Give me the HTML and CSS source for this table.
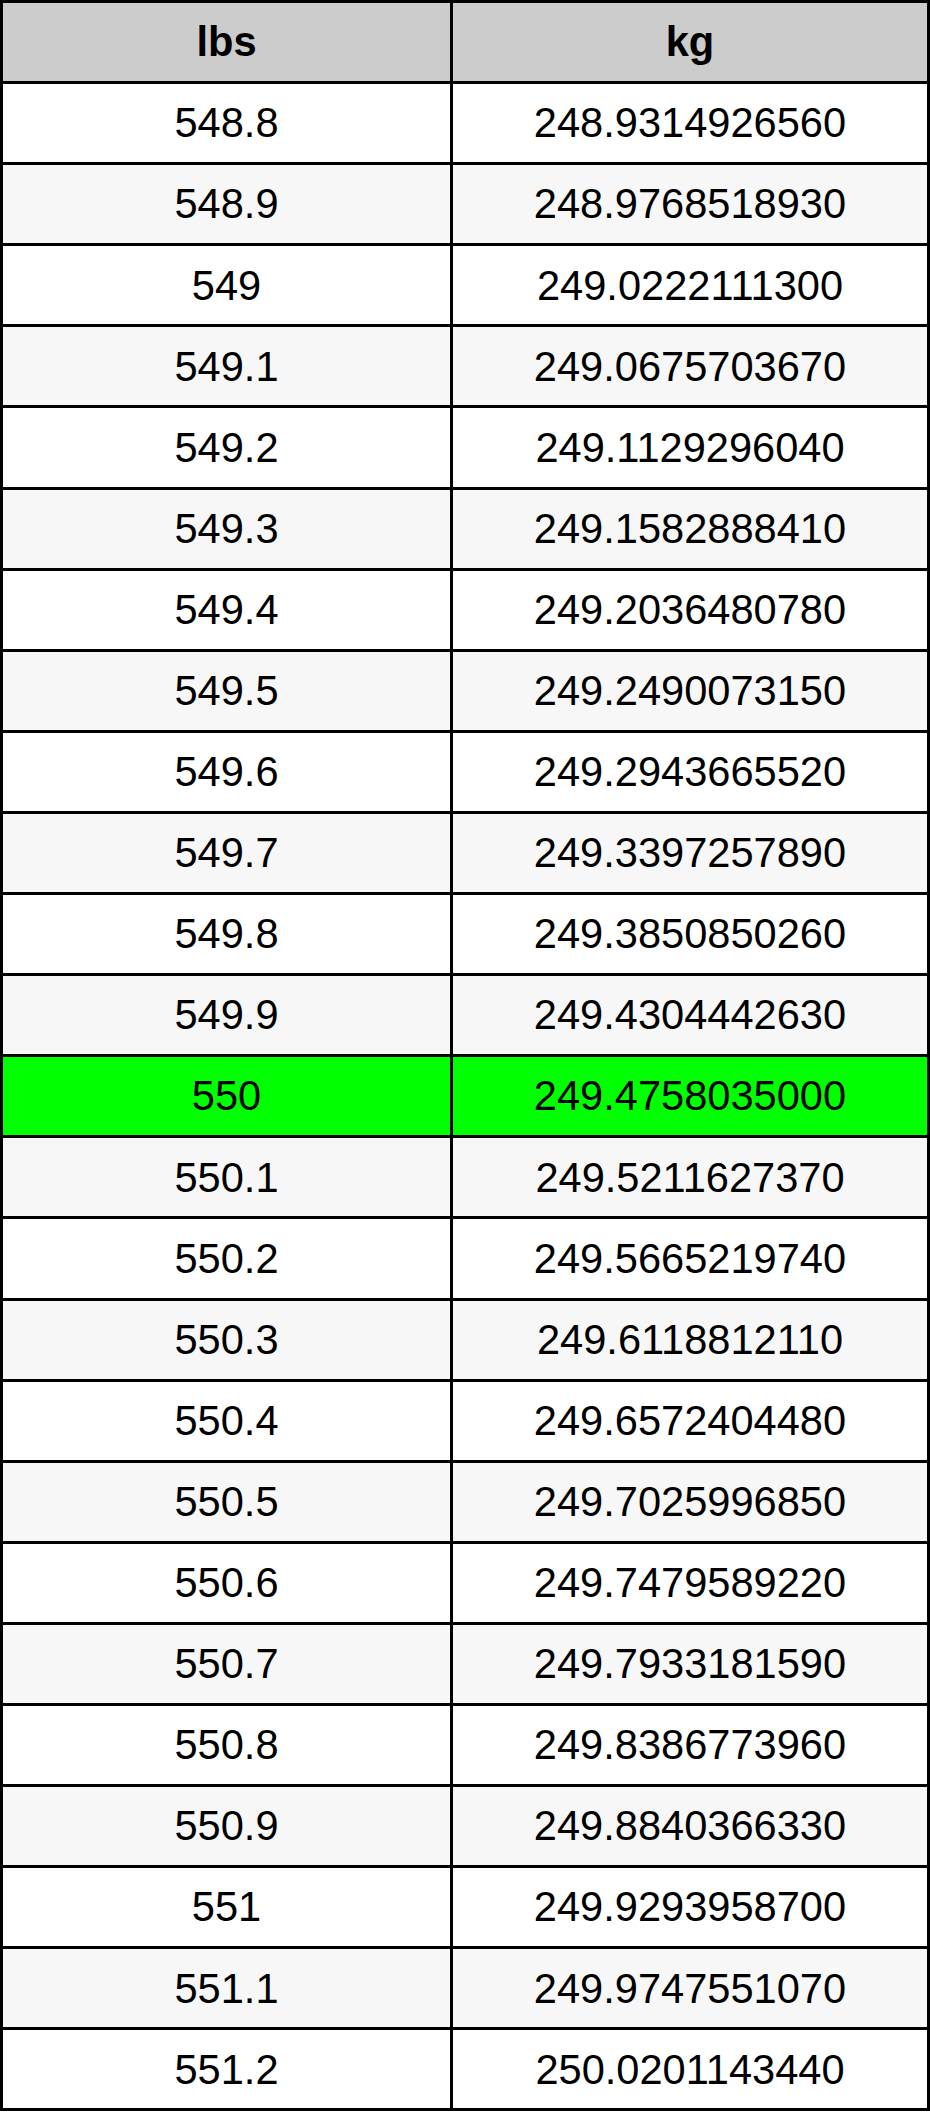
FILE: index.html
```html
<!DOCTYPE html>
<html>
<head>
<meta charset="utf-8">
<link rel="stylesheet" href="styles.css">
</head>
<body>
<table class="conv">
<thead>
<tr><th class="c1">lbs</th><th class="c2">kg</th></tr>
</thead>
<tbody>
<tr><td>548.8</td><td>248.9314926560</td></tr>
<tr><td>548.9</td><td>248.9768518930</td></tr>
<tr><td>549</td><td>249.0222111300</td></tr>
<tr><td>549.1</td><td>249.0675703670</td></tr>
<tr><td>549.2</td><td>249.1129296040</td></tr>
<tr><td>549.3</td><td>249.1582888410</td></tr>
<tr><td>549.4</td><td>249.2036480780</td></tr>
<tr><td>549.5</td><td>249.2490073150</td></tr>
<tr><td>549.6</td><td>249.2943665520</td></tr>
<tr><td>549.7</td><td>249.3397257890</td></tr>
<tr><td>549.8</td><td>249.3850850260</td></tr>
<tr><td>549.9</td><td>249.4304442630</td></tr>
<tr class="hl"><td>550</td><td>249.4758035000</td></tr>
<tr><td>550.1</td><td>249.5211627370</td></tr>
<tr><td>550.2</td><td>249.5665219740</td></tr>
<tr><td>550.3</td><td>249.6118812110</td></tr>
<tr><td>550.4</td><td>249.6572404480</td></tr>
<tr><td>550.5</td><td>249.7025996850</td></tr>
<tr><td>550.6</td><td>249.7479589220</td></tr>
<tr><td>550.7</td><td>249.7933181590</td></tr>
<tr><td>550.8</td><td>249.8386773960</td></tr>
<tr><td>550.9</td><td>249.8840366330</td></tr>
<tr><td>551</td><td>249.9293958700</td></tr>
<tr><td>551.1</td><td>249.9747551070</td></tr>
<tr><td>551.2</td><td>250.0201143440</td></tr>
</tbody>
</table>
</body>
</html>
```

FILE: styles.css
```css
html, body {
  margin: 0;
  padding: 0;
  background: #ffffff;
}

.conv {
  border-collapse: collapse;
  width: 930px;
  table-layout: fixed;
  font-family: "Liberation Sans", Arial, sans-serif;
  font-size: 41.6px;
  color: #000000;
}

.conv th,
.conv td {
  border: 3px solid #000000;
  text-align: center;
  vertical-align: middle;
  padding: 0;
  line-height: 1;
}

.conv tr {
  height: 81.1px;
}

.conv th {
  background: #cccccc;
  font-weight: bold;
}

.conv .c1 {
  width: 447px;
}

.conv tbody tr:nth-child(odd) td {
  background: #ffffff;
}

.conv tbody tr:nth-child(even) td {
  background: #f7f7f7;
}

.conv tbody tr.hl td {
  background: #00ff00;
}
```
